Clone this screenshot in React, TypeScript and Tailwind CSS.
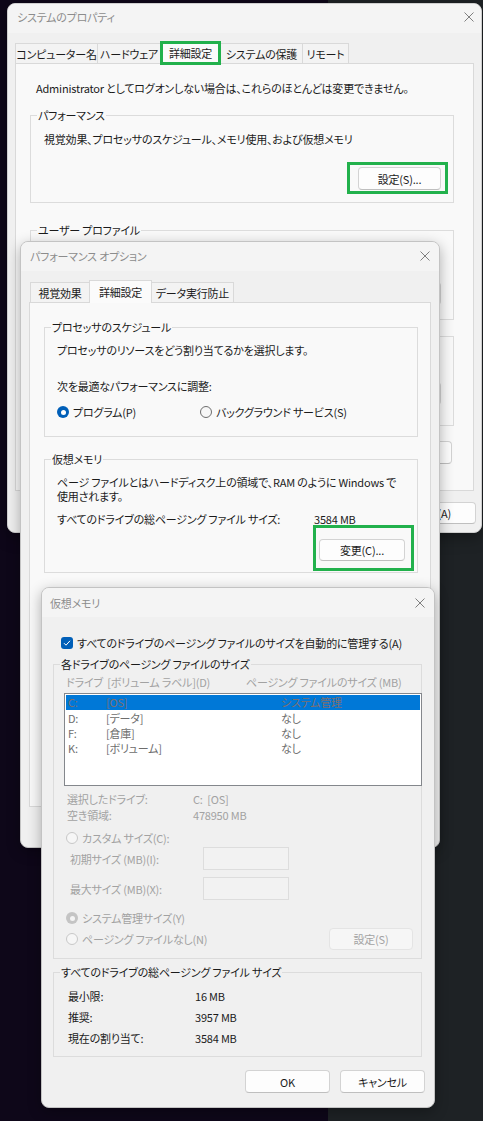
import React from "react";

type C = { children?: React.ReactNode; className?: string };

function CloseX() {
  return (
    <svg width="10" height="10" viewBox="0 0 10 10" className="block shrink-0">
      <path d="M0.5 0.5L9.5 9.5M9.5 0.5L0.5 9.5" stroke="#7f7f7f" strokeWidth="1" fill="none" />
    </svg>
  );
}

function Green({ className = "" }: { className?: string }) {
  return <span className={`pointer-events-none absolute border-[3px] border-[#22b14c] ${className}`} />;
}

function Btn({ children, className = "", disabled = false }: C & { disabled?: boolean }) {
  return (
    <div
      className={`flex shrink-0 items-center justify-center rounded-[4px] border ${
        disabled
          ? "border-[#e4e4e4] bg-[#f6f6f6] text-[#a3a3a3]"
          : "border-[#d3d3d3] border-b-[#bfbfbf] bg-[#fdfdfd] text-[#1b1b1b]"
      } ${className}`}
    >
      {children}
    </div>
  );
}

function Group({ label, children, className = "" }: C & { label: string }) {
  return (
    <fieldset className={`min-w-0 shrink-0 border border-[#dcdcdc] ${className}`}>
      <legend className="ml-[6px] px-[1px] leading-[14px]">{label}</legend>
      {children}
    </fieldset>
  );
}

function Tab({ label, w, selected = false, green = false, first = false }: { label: string; w: string; selected?: boolean; green?: boolean; first?: boolean }) {
  if (selected)
    return (
      <div className={`relative z-10 -mb-px -ml-px flex h-[23px] shrink-0 items-center justify-center border border-b-0 border-[#d9d9d9] bg-[#fbfbfb] ${w}`}>
        {label}
        {green && <Green className="-inset-px" />}
      </div>
    );
  return (
    <div className={`flex h-[20px] shrink-0 items-center justify-center border border-b-0 border-[#d9d9d9] bg-[#f3f3f3] ${first ? "" : "-ml-px"} ${w}`}>
      {label}
    </div>
  );
}

function Radio({ checked = false, disabled = false }: { checked?: boolean; disabled?: boolean }) {
  if (checked && !disabled)
    return (
      <span className="flex h-[12px] w-[12px] shrink-0 items-center justify-center rounded-full bg-[#005fb8]">
        <span className="h-[5px] w-[5px] rounded-full bg-white" />
      </span>
    );
  if (checked && disabled)
    return (
      <span className="flex h-[12px] w-[12px] shrink-0 items-center justify-center rounded-full bg-[#c4c4c4]">
        <span className="h-[5px] w-[5px] rounded-full bg-[#f4f4f4]" />
      </span>
    );
  return (
    <span
      className={`h-[12px] w-[12px] shrink-0 rounded-full border ${
        disabled ? "border-[#c8c8c8] bg-[#f6f6f6]" : "border-[#6e6e6e] bg-[#f7f7f7]"
      }`}
    />
  );
}

function Checkbox() {
  return (
    <span className="flex h-[12px] w-[12px] shrink-0 items-center justify-center rounded-[3px] bg-[#005fb8]">
      <svg width="8" height="8" viewBox="0 0 8 8">
        <path d="M1 4.2L3 6.2L7 1.8" stroke="white" strokeWidth="1" fill="none" />
      </svg>
    </span>
  );
}

function TitleBar({ title, pl, pt, pr, xt }: { title: string; pl: string; pt: string; pr: string; xt: string }) {
  return (
    <div className={`flex h-[29px] shrink-0 items-start justify-between bg-[#f4f4f4] ${pl} ${pr}`}>
      <span className={`text-[#8c8c8c] ${pt}`}>{title}</span>
      <span className={xt}>
        <CloseX />
      </span>
    </div>
  );
}

function SystemProperties() {
  return (
    <div className="absolute left-[7px] top-[3px] flex h-[530px] w-[475px] flex-col overflow-hidden rounded-[8px] border border-[#cfcfcf] bg-[#f0f0f0] shadow-[0_4px_16px_rgba(0,0,0,0.35)]">
      <TitleBar title="システムのプロパティ" pl="pl-[9px]" pt="pt-[6px]" pr="pr-[7px]" xt="pt-[8px]" />
      <div className="mt-[8px] flex h-[22px] items-end pl-[7px]">
        <Tab label="コンピューター名" w="w-[83px]" first />
        <Tab label="ハードウェア" w="w-[64px]" />
        <Tab label="詳細設定" w="w-[61px]" selected green />
        <Tab label="システムの保護" w="w-[83px]" />
        <Tab label="リモート" w="w-[47px]" />
      </div>
      <div className="ml-[7px] flex h-[428px] w-[459px] flex-col border border-[#d9d9d9] bg-[#f9f9f9] px-[14px]">
        <p className="ml-[6px] mt-[17px]">Administrator としてログオンしない場合は、これらのほとんどは変更できません。</p>
        <Group label="パフォーマンス" className="mt-[13px] w-[424px]">
          <div className="flex flex-col pb-[12px] pl-[13px] pr-[12px] pt-[10px]">
            <p>視覚効果、プロセッサのスケジュール、メモリ使用、および仮想メモリ</p>
            <div className="mt-[21px] flex justify-end">
              <div className="relative">
                <Btn className="h-[23px] w-[83px]">設定(S)...</Btn>
                <Green className="-bottom-[4px] -left-[11px] -right-[7px] -top-[5px]" />
              </div>
            </div>
          </div>
        </Group>
        <Group label="ユーザー プロファイル" className="mt-[20px] h-[97px] w-[424px]">
          <div className="flex flex-col pl-[13px] pr-[12px] pt-[45px]">
            <div className="flex justify-end">
              <Btn className="h-[23px] w-[83px]" />
            </div>
          </div>
        </Group>
        <div className="mt-[16px] flex h-[90px] w-[424px] shrink-0 flex-col border border-[#dcdcdc] pr-[12px] pt-[45px]">
          <div className="flex justify-end">
            <Btn className="h-[23px] w-[83px]" />
          </div>
        </div>
        <div className="mt-[15px] flex justify-end pr-[7px]">
          <Btn className="h-[23px] w-[86px]" />
        </div>
      </div>
      <div className="mt-[11px] flex justify-end gap-[10px] pr-[5px]">
        <Btn className="h-[22px] w-[85px]">適用(A)</Btn>
      </div>
    </div>
  );
}

function PerformanceOptions() {
  return (
    <div className="absolute left-[20px] top-[241px] flex h-[607px] w-[420px] flex-col overflow-hidden rounded-[8px] border border-[#c3c3c3] bg-[#f0f0f0] shadow-[0_4px_14px_rgba(0,0,0,0.3)]">
      <TitleBar title="パフォーマンス オプション" pl="pl-[9px]" pt="pt-[7px]" pr="pr-[9px]" xt="pt-[9px]" />
      <div className="mt-[9px] flex h-[22px] items-end pl-[9px]">
        <Tab label="視覚効果" w="w-[60px]" first />
        <Tab label="詳細設定" w="w-[63px]" selected />
        <Tab label="データ実行防止" w="w-[83px]" />
      </div>
      <div className="ml-[8px] flex h-[505px] w-[402px] flex-col border border-[#d9d9d9] bg-[#f9f9f9] px-[14px]">
        <Group label="プロセッサのスケジュール" className="mt-[17px] w-[374px]">
          <div className="flex flex-col pb-[17px] pl-[12px] pt-[9px]">
            <p>プロセッサのリソースをどう割り当てるかを選択します。</p>
            <p className="mt-[22px]">次を最適なパフォーマンスに調整:</p>
            <div className="mt-[12px] flex items-center">
              <div className="flex w-[143px] items-center gap-[4px]">
                <Radio checked />
                <span>プログラム(P)</span>
              </div>
              <div className="flex items-center gap-[4px]">
                <Radio />
                <span>バックグラウンド サービス(S)</span>
              </div>
            </div>
          </div>
        </Group>
        <Group label="仮想メモリ" className="mt-[15px] w-[374px]">
          <div className="flex flex-col pb-[11px] pl-[12px] pr-[12px] pt-[9px]">
            <p>
              ページ ファイルとはハードディスク上の領域で、RAM のように Windows で
              <br />
              使用されます。
            </p>
            <div className="mt-[9px] flex">
              <span className="w-[257px]">すべてのドライブの総ページング ファイル サイズ:</span>
              <span>3584 MB</span>
            </div>
            <div className="mt-[13px] flex justify-end">
              <div className="relative">
                <Btn className="h-[22px] w-[86px]">変更(C)...</Btn>
                <Green className="-bottom-[10px] -left-[6px] -right-[9px] -top-[14px]" />
              </div>
            </div>
          </div>
        </Group>
      </div>
    </div>
  );
}

const drives = [
  { d: "C:", l: "[OS]", s: "システム管理", sel: true },
  { d: "D:", l: "[データ]", s: "なし", sel: false },
  { d: "F:", l: "[倉庫]", s: "なし", sel: false },
  { d: "K:", l: "[ボリューム]", s: "なし", sel: false },
];

function VirtualMemory() {
  return (
    <div className="absolute left-[41px] top-[587px] flex h-[521px] w-[394px] flex-col overflow-hidden rounded-[8px] border border-[#c3c3c3] bg-[#f0f0f0] shadow-[0_4px_14px_rgba(0,0,0,0.3)]">
      <TitleBar title="仮想メモリ" pl="pl-[8px]" pt="pt-[8px]" pr="pr-[9px]" xt="pt-[10px]" />
      <div className="mt-[19px] flex items-center gap-[4px] pl-[19px]">
        <Checkbox />
        <span>すべてのドライブのページング ファイルのサイズを自動的に管理する(A)</span>
      </div>
      <Group label="各ドライブのページング ファイルのサイズ" className="ml-[11px] mt-[7px] w-[369px]">
        <div className="flex flex-col pb-[8px] pt-[4px]">
          <div className="flex pl-[12px] text-[#a2a2a2]">
            <span className="w-[180px]">ドライブ&nbsp;&nbsp;[ボリューム ラベル](D)</span>
            <span>ページング ファイルのサイズ (MB)</span>
          </div>
          <div className="ml-[10px] mt-[4px] flex h-[93px] w-[358px] flex-col border border-[#84878c] bg-white p-px">
            {drives.map((r) => (
              <div
                key={r.d}
                className={`flex h-[15.4px] shrink-0 items-center pl-[2px] leading-[15px] ${
                  r.sel ? "bg-[#0078d7] text-[#7d6f70]" : "text-[#6d6d6d]"
                }`}
              >
                <span className="w-[38px]">{r.d}</span>
                <span className="w-[175px]">{r.l}</span>
                <span>{r.s}</span>
              </div>
            ))}
          </div>
          <div className="ml-[13px] mt-[5px] flex flex-col text-[#a2a2a2]">
            <div className="flex h-[16px] items-center">
              <span className="w-[126px]">選択したドライブ:</span>
              <span>C:&nbsp;&nbsp;[OS]</span>
            </div>
            <div className="flex h-[16px] items-center">
              <span className="w-[126px]">空き領域:</span>
              <span>478950 MB</span>
            </div>
          </div>
          <div className="ml-[12px] mt-[8px] flex items-center gap-[4px] text-[#a2a2a2]">
            <Radio disabled />
            <span>カスタム サイズ(C):</span>
          </div>
          <div className="ml-[16px] mt-[2px] flex items-center text-[#a2a2a2]">
            <span className="w-[133px]">初期サイズ (MB)(I):</span>
            <span className="h-[23px] w-[86px] border border-[#dddddd] bg-[#f2f2f2]" />
          </div>
          <div className="ml-[16px] mt-[7px] flex items-center text-[#a2a2a2]">
            <span className="w-[133px]">最大サイズ (MB)(X):</span>
            <span className="h-[23px] w-[86px] border border-[#dddddd] bg-[#f2f2f2]" />
          </div>
          <div className="ml-[12px] mt-[11px] flex items-center gap-[4px] text-[#a2a2a2]">
            <Radio checked disabled />
            <span>システム管理サイズ(Y)</span>
          </div>
          <div className="ml-[12px] mr-[8px] mt-[3px] flex items-center justify-between text-[#a2a2a2]">
            <div className="flex items-center gap-[4px]">
              <Radio disabled />
              <span>ページング ファイルなし(N)</span>
            </div>
            <Btn disabled className="h-[22px] w-[84px]">設定(S)</Btn>
          </div>
        </div>
      </Group>
      <Group label="すべてのドライブの総ページング ファイル サイズ" className="ml-[11px] mt-[6px] w-[369px]">
        <div className="flex flex-col pb-[8px] pl-[14px] pt-[6px]">
          {[
            ["最小限:", "16 MB"],
            ["推奨:", "3957 MB"],
            ["現在の割り当て:", "3584 MB"],
          ].map(([k, v]) => (
            <div key={k} className="flex h-[21px] items-center">
              <span className="w-[127px]">{k}</span>
              <span>{v}</span>
            </div>
          ))}
        </div>
      </Group>
      <div className="mt-[13px] flex justify-end gap-[10px] pr-[9px]">
        <Btn className="h-[23px] w-[85px]">OK</Btn>
        <Btn className="h-[23px] w-[85px]">キャンセル</Btn>
      </div>
    </div>
  );
}

export default function App() {
  return (
    <div className="relative h-[1121px] w-[483px] overflow-hidden whitespace-nowrap text-[11px] leading-[14px] tracking-[-0.2px] text-[#1b1b1b] [font-family:'Noto_Sans_CJK_JP','Noto_Sans',sans-serif] [font-feature-settings:'palt']">
      <div className="flex h-full w-full">
        <div className="h-full w-[328px] bg-[#0e0719]" />
        <div className="h-full flex-1 bg-[#1e2225]" />
      </div>
      <SystemProperties />
      <PerformanceOptions />
      <VirtualMemory />
    </div>
  );
}
